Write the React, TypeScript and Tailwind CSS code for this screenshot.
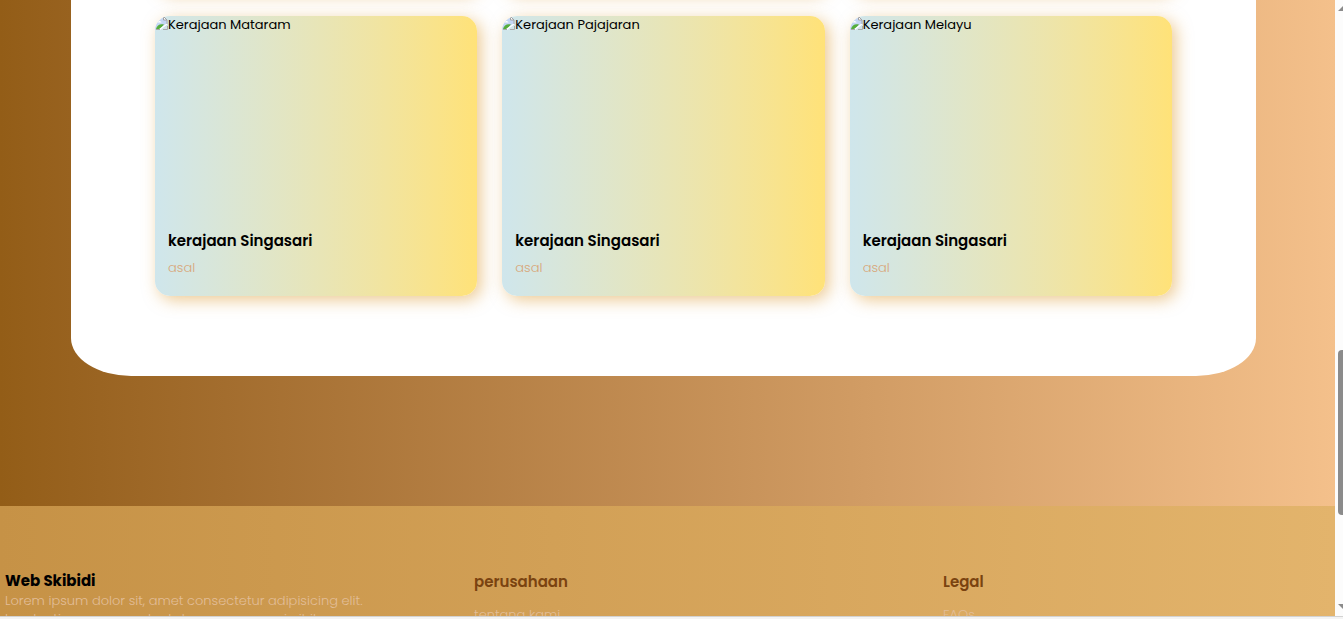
import React from 'react';

const kingdoms = ['Kerajaan Mataram', 'Kerajaan Pajajaran', 'Kerajaan Melayu'];

function MissingImageIcon() {
  return (
    <svg width="13" height="14" viewBox="0 0 13 14" className="shrink-0" aria-hidden="true">
      <path d="M0 0h8.5L12.5 4v5L5 14H0z" fill="#c4d6f4" />
      <path d="M2 6.5C2.500 4.500 6 4.500 6.500 6.500z" fill="#fff" />
      <path d="M1 13c1-4 4-5.500 8-4.500L5 13z" fill="#55ad3c" />
      <path d="M4.500 13.500L12 8" stroke="#fff" strokeWidth="1.500" fill="none" />
      <path d="M8.500 .5v3.500h3.500z" fill="#fff" stroke="#a0a0a0" />
      <path d="M12 4v4M1 13.500h4M8 13.500h4.500v-3.500" stroke="#a9a9a9" fill="none" />
    </svg>
  );
}

function KingdomCard({ name }: { name: string }) {
  return (
    <article className="overflow-hidden rounded-[15px] bg-linear-to-r from-[#cfe6ec] to-[#ffe278] shadow-[4px_4px_16px_rgba(220,150,40,0.5)]">
      <div role="img" aria-label={name} className="flex h-[203px] items-start text-[13px] leading-[18px] text-black">
        <MissingImageIcon />
        {name}
      </div>
      <div className="px-[13px] pt-2.5 pb-[18px]">
        <h3 className="text-[15px] leading-6 font-semibold text-black">kerajaan Singasari</h3>
        <p className="mt-[5px] text-[13px] leading-5 font-light text-[#d8a67a]">asal</p>
      </div>
    </article>
  );
}

function FooterColumn({ title, link }: { title: string; link: string }) {
  return (
    <div>
      <h4 className="text-[15px] leading-6 font-semibold text-[#7a4310]">{title}</h4>
      <a href="#" className="mt-[11px] block text-[13px] leading-5 font-light text-[#e2bd98]">{link}</a>
    </div>
  );
}

export default function App() {
  return (
    <div className="flex h-screen flex-col bg-[#f4f4f4] font-['Poppins',sans-serif]">
      <div className="flex min-h-0 flex-1">
        <div className="flex-1 overflow-hidden bg-linear-to-r from-[#935d17] to-[#f4c08b]">
          <main className="mr-[79px] ml-[71px] overflow-hidden rounded-b-[60px_38px] bg-white px-[84px] pb-20">
            <div className="-mt-[49px] mb-[25px] grid grid-cols-3 gap-[25px]" aria-hidden="true">
              {kingdoms.map((name) => (
                <div key={name} className="h-10 rounded-[15px] bg-[#e7e4b2] shadow-[4px_4px_16px_rgba(220,150,40,0.5)]" />
              ))}
            </div>
            <div className="grid grid-cols-3 gap-[25px]">
              {kingdoms.map((name) => (
                <KingdomCard key={name} name={name} />
              ))}
            </div>
          </main>
          <footer className="mt-[130px] grid grid-cols-[469px_469px_1fr] bg-linear-to-r from-[#c69246] to-[#e3b46c] px-[5px] pt-16 pb-20">
            <div>
              <h4 className="text-[15px] leading-[22px] font-bold text-black">Web Skibidi</h4>
              <p className="w-[380px] text-[13px] leading-[18px] font-light text-[#e2bd98]">
                Lorem ipsum dolor sit, amet consectetur adipisicing elit. Laudantium earum voluptatem rerum possi nihil.
              </p>
            </div>
            <FooterColumn title="perusahaan" link="tentang kami" />
            <FooterColumn title="Legal" link="FAQs" />
          </footer>
        </div>
        <div className="flex w-2 flex-col overflow-hidden bg-[#fcfcfc] pl-[3px]" aria-hidden="true">
          <svg width="10" height="12" viewBox="0 0 10 12" className="shrink-0">
            <path d="M0 11L5 6l5 5z" fill="#8b8b8b" />
          </svg>
          <div className="mt-[338px] h-[165px] w-2.5 rounded-[4px] bg-[#8b8b8b]" />
          <svg width="10" height="12" viewBox="0 0 10 12" className="mt-auto shrink-0">
            <path d="M0 0h10L5 5z" fill="#8b8b8b" />
          </svg>
        </div>
      </div>
      <div className="h-[3px] border-t border-[#d2d2d2]" />
    </div>
  );
}
